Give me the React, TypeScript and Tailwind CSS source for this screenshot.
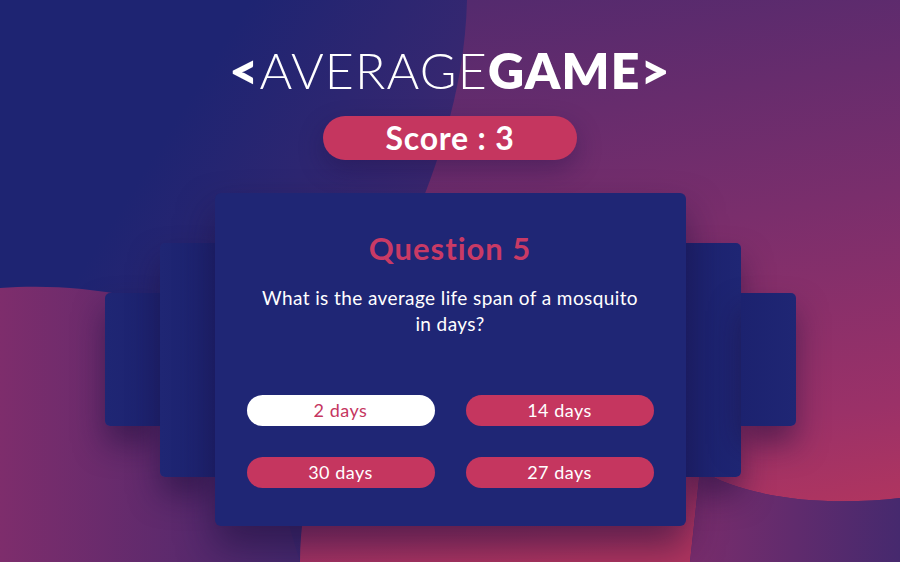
import React from "react";

function Background() {
  return (
    <svg
      className="absolute inset-0"
      width="900"
      height="562"
      viewBox="0 0 900 562"
      xmlns="http://www.w3.org/2000/svg"
    >
      <defs>
        <linearGradient id="base" x1="0" y1="0" x2="900" y2="562" gradientUnits="userSpaceOnUse">
          <stop offset="0.2" stopColor="#1e2472" />
          <stop offset="0.45" stopColor="#3c2870" />
          <stop offset="0.8" stopColor="#4a2a6e" />
          <stop offset="1" stopColor="#44296f" />
        </linearGradient>
        <linearGradient id="blobA" x1="470" y1="0" x2="560" y2="562" gradientUnits="userSpaceOnUse">
          <stop offset="0" stopColor="#542a6e" />
          <stop offset="0.45" stopColor="#7a2e6c" />
          <stop offset="0.82" stopColor="#9b3168" />
          <stop offset="1" stopColor="#b1355f" />
        </linearGradient>
        <linearGradient id="blobB" x1="0" y1="0" x2="300" y2="0" gradientUnits="userSpaceOnUse">
          <stop offset="0" stopColor="#7e2d6c" />
          <stop offset="0.7" stopColor="#55296d" />
          <stop offset="1" stopColor="#45296e" />
        </linearGradient>
        <linearGradient id="br" x1="690" y1="0" x2="900" y2="0" gradientUnits="userSpaceOnUse">
          <stop offset="0" stopColor="#7a2d6c" />
          <stop offset="1" stopColor="#46296e" />
        </linearGradient>
      </defs>
      <rect width="900" height="562" fill="url(#base)" />
      <path d="M467,0 L900,0 L900,498 C 830,506 750,500 700,470 L 690,562 L 300,562 C 300,380 462,220 467,0 Z" fill="url(#blobA)" />
      <path d="M700,470 C 750,500 830,506 900,498 L900,562 L690,562 Z" fill="url(#br)" />
      <path d="M0,288 C 70,283 150,292 230,330 L 300,562 L 0,562 Z" fill="url(#blobB)" />
    </svg>
  );
}

export default function App() {
  const sideShadow = "shadow-[0_18px_30px_rgba(28,14,60,0.5)]";
  return (
    <div className="relative w-[900px] h-[562px] overflow-hidden bg-[#1e2472] font-['Lato',sans-serif]">
      <Background />
      <div className="relative flex flex-col items-center">
        <h1 className="mt-[43px] text-[50px] leading-[54px] text-white tracking-[1.2px] whitespace-nowrap">
          <span className="font-extrabold">&lt;</span>
          <span className="font-light">AVERAGE</span>
          <span className="font-extrabold">GAME&gt;</span>
        </h1>
        <div className="mt-[19px] w-[254px] h-[44px] rounded-full bg-[#c5365f] flex items-center justify-center text-white font-bold text-[32px] tracking-[0.8px] shadow-[0_10px_24px_rgba(30,15,70,0.35)]">
          Score : 3
        </div>
        <div className="mt-[33px] flex items-center">
          <div className={`w-[55px] h-[133px] rounded-l-[5px] bg-gradient-to-r from-[#1f2674] to-[#1c226f] ${sideShadow}`} />
          <div className={`w-[55px] h-[234px] rounded-l-[5px] bg-gradient-to-r from-[#1f2674] to-[#1c226f] ${sideShadow}`} />
          <div className="relative w-[471px] h-[333px] rounded-[6px] bg-[#1f2675] shadow-[0_20px_36px_rgba(28,14,60,0.55)] flex flex-col items-center pt-[36px]">
            <div className="text-[31px] leading-[38px] font-bold tracking-[1px] text-[#c93a65]">Question 5</div>
            <p className="mt-[18px] w-[380px] text-center text-white text-[19px] leading-[26px] tracking-[0.4px]">
              What is the average life span of a mosquito in days?
            </p>
            <div className="mt-[58px] grid grid-cols-2 gap-x-[31px] gap-y-[31px]">
              <div className="w-[188px] h-[31px] rounded-full bg-white text-[#c5365f] text-[18px] tracking-[0.5px] flex items-center justify-center">2 days</div>
              <div className="w-[188px] h-[31px] rounded-full bg-[#c5365f] text-white text-[18px] tracking-[0.5px] flex items-center justify-center">14 days</div>
              <div className="w-[188px] h-[31px] rounded-full bg-[#c5365f] text-white text-[18px] tracking-[0.5px] flex items-center justify-center">30 days</div>
              <div className="w-[188px] h-[31px] rounded-full bg-[#c5365f] text-white text-[18px] tracking-[0.5px] flex items-center justify-center">27 days</div>
            </div>
          </div>
          <div className={`w-[55px] h-[234px] rounded-r-[5px] bg-gradient-to-l from-[#1f2674] to-[#1c226f] ${sideShadow}`} />
          <div className={`w-[55px] h-[133px] rounded-r-[5px] bg-gradient-to-l from-[#1f2674] to-[#1c226f] ${sideShadow}`} />
        </div>
      </div>
    </div>
  );
}
